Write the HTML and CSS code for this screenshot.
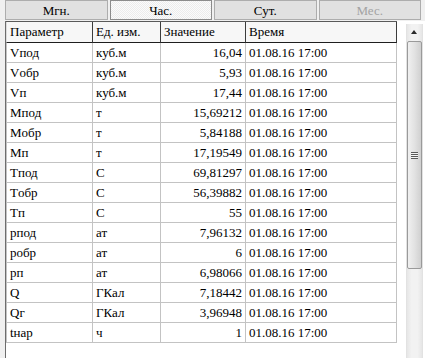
FILE: index.html
```html
<!DOCTYPE html>
<html lang="ru">
<head>
  <meta charset="UTF-8" />
  <title>Архив</title>
  <link rel="stylesheet" href="styles.css">
</head>
<body>
  <div class="tabs">
    <div class="tab">Мгн.</div>
    <div class="tab active">Час.</div>
    <div class="tab">Сут.</div>
    <div class="tab disabled">Мес.</div>
  </div>

  <div class="panel">
    <div class="grid">
      <table>
        <thead>
          <tr>
            <th class="c1">Параметр</th>
            <th class="c2">Ед. изм.</th>
            <th class="c3">Значение</th>
            <th class="c4">Время</th>
          </tr>
        </thead>
        <tbody>
          <tr><td>Vпод</td><td>куб.м</td><td class="num">16,04</td><td>01.08.16 17:00</td></tr>
          <tr><td>Vобр</td><td>куб.м</td><td class="num">5,93</td><td>01.08.16 17:00</td></tr>
          <tr><td>Vп</td><td>куб.м</td><td class="num">17,44</td><td>01.08.16 17:00</td></tr>
          <tr><td>Mпод</td><td>т</td><td class="num">15,69212</td><td>01.08.16 17:00</td></tr>
          <tr><td>Mобр</td><td>т</td><td class="num">5,84188</td><td>01.08.16 17:00</td></tr>
          <tr><td>Mп</td><td>т</td><td class="num">17,19549</td><td>01.08.16 17:00</td></tr>
          <tr><td>Tпод</td><td>C</td><td class="num">69,81297</td><td>01.08.16 17:00</td></tr>
          <tr><td>Tобр</td><td>C</td><td class="num">56,39882</td><td>01.08.16 17:00</td></tr>
          <tr><td>Tп</td><td>C</td><td class="num">55</td><td>01.08.16 17:00</td></tr>
          <tr><td>pпод</td><td>ат</td><td class="num">7,96132</td><td>01.08.16 17:00</td></tr>
          <tr><td>pобр</td><td>ат</td><td class="num">6</td><td>01.08.16 17:00</td></tr>
          <tr><td>pп</td><td>ат</td><td class="num">6,98066</td><td>01.08.16 17:00</td></tr>
          <tr><td>Q</td><td>ГКал</td><td class="num">7,18442</td><td>01.08.16 17:00</td></tr>
          <tr><td>Qг</td><td>ГКал</td><td class="num">3,96948</td><td>01.08.16 17:00</td></tr>
          <tr><td>tнар</td><td>ч</td><td class="num">1</td><td>01.08.16 17:00</td></tr>
        </tbody>
      </table>
    </div>

    <div class="scrollbar">
      <div class="arrow"></div>
      <div class="thumb"><span class="grip"></span></div>
    </div>
  </div>
</body>
</html>
```

FILE: styles.css
```css
body {
  margin: 0;
  background: #f0f0f0;
  font-family: "Liberation Serif", "Times New Roman", "DejaVu Serif", serif;
  font-size: 13px;
  color: #000;
  overflow: hidden;
}
.tabs {
  display: flex;
  gap: 2px;
  padding: 0 4px 0 5px;
  height: 20px;
  margin-bottom: 1px;
}
.tab {
  flex: 1;
  border: 1px solid #adadad;
  background: #e1e1e1;
  text-align: center;
  line-height: 18px;
  padding-top: 1px;
}
.tab.active {
  border-color: #8c8c8c;
  background: repeating-conic-gradient(#fbfbfb 0 25%, #ececec 0 50%) 0 0 / 2px 2px;
}
.tab.disabled {
  color: #a3a3a3;
}
.panel {
  display: flex;
  margin-left: 5px;
  border-left: 1px solid #6d6d6d;
  background: #fff;
  height: 340px;
}
.grid {
  width: 391px;
  margin-right: 9px;
}
table {
  width: 100%;
  border-collapse: separate;
  border-spacing: 0;
  table-layout: fixed;
  border-top: 1px solid #5a5a5a;
}
th, td {
  padding: 0 3px;
  text-align: left;
  white-space: nowrap;
  overflow: hidden;
}
th {
  height: 20px;
  font-weight: normal;
  background: #f7f7f7;
  border-right: 1px solid #3c3c3c;
  border-bottom: 1px solid #1e1e1e;
}
th:first-child {
  border-left: 1px solid #dcdcdc;
}
td {
  height: 19px;
  border-right: 1px solid #c3c3c3;
  border-bottom: 1px solid #c3c3c3;
}
td:first-child {
  border-left: 1px solid #c3c3c3;
}
.c1 { width: 79px; }
.c2 { width: 61px; }
.c3 { width: 78px; }
.num {
  text-align: right;
}
.scrollbar {
  width: 15px;
  margin-top: 3px;
  background: linear-gradient(90deg, #e6e6e6, #f2f2f2 30%, #f2f2f2 70%, #e6e6e6);
  border-left: 1px solid #e2e2e2;
  border-right: 1px solid #e2e2e2;
}
.arrow {
  height: 17px;
  position: relative;
}
.arrow::after {
  content: "";
  position: absolute;
  left: 4px;
  top: 6px;
  border-left: 3px solid transparent;
  border-right: 3px solid transparent;
  border-bottom: 4px solid #2a2a2a;
}
.thumb {
  height: 226px;
  border: 1px solid #9a9a9a;
  border-radius: 2px;
  background: linear-gradient(90deg, #f0f0f0, #e2e2e2 50%, #d0d0d0);
  display: flex;
  align-items: center;
  justify-content: center;
}
.grip {
  width: 7px;
  height: 7px;
  background: repeating-linear-gradient(#595959 0 1px, #f4f4f4 1px 2px);
}
```
